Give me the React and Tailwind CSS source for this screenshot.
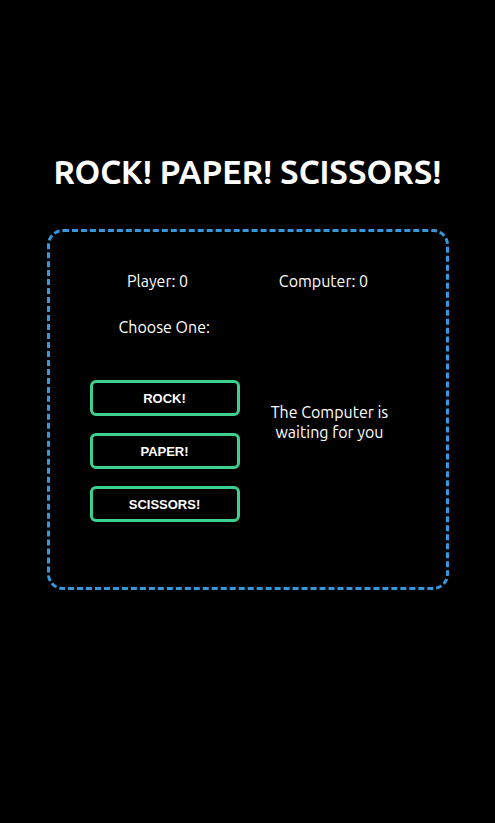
import React, { useState } from 'react';

export default function App() {
  const [playerScore] = useState(0);
  const [computerScore] = useState(0);

  return (
    <div className="min-h-[823px] bg-black text-white font-['Ubuntu','Open_Sans',sans-serif]">
      <div className="pt-[152px] flex flex-col items-center">
        {/* Title */}
        <h1 className="text-[32.7px] font-bold leading-[40px]">ROCK! PAPER! SCISSORS!</h1>

        {/* Game board */}
        <div className="mt-[37px] w-[402px] h-[361px] border-[3px] border-dashed border-[#3498db] rounded-[16px]">
          <div className="flex pt-[37px] text-[16px] leading-[24px]">
            <div className="w-[216px] text-center">Player: {playerScore}</div>
            <div className="w-[116px] text-center">Computer: {computerScore}</div>
          </div>

          <div className="mt-[22px] ml-[69px] text-[16px] leading-[24px]">Choose One:</div>

          <div className="flex mt-[41px]">
            <div className="ml-[40px] flex flex-col gap-[17px]">
              {['ROCK!', 'PAPER!', 'SCISSORS!'].map((label) => (
                <button
                  key={label}
                  className="w-[150px] h-[36px] pt-px border-[3px] border-[#3ccf8e] rounded-[6px] bg-black text-white font-['Liberation_Sans',Arial,sans-serif] font-bold text-[13px]"
                >
                  {label}
                </button>
              ))}
            </div>
            <div className="ml-[23px] w-[134px] pt-[22px] text-center text-[16px] leading-[20px]">
              The Computer is waiting for you
            </div>
          </div>
        </div>
      </div>
    </div>
  );
}
